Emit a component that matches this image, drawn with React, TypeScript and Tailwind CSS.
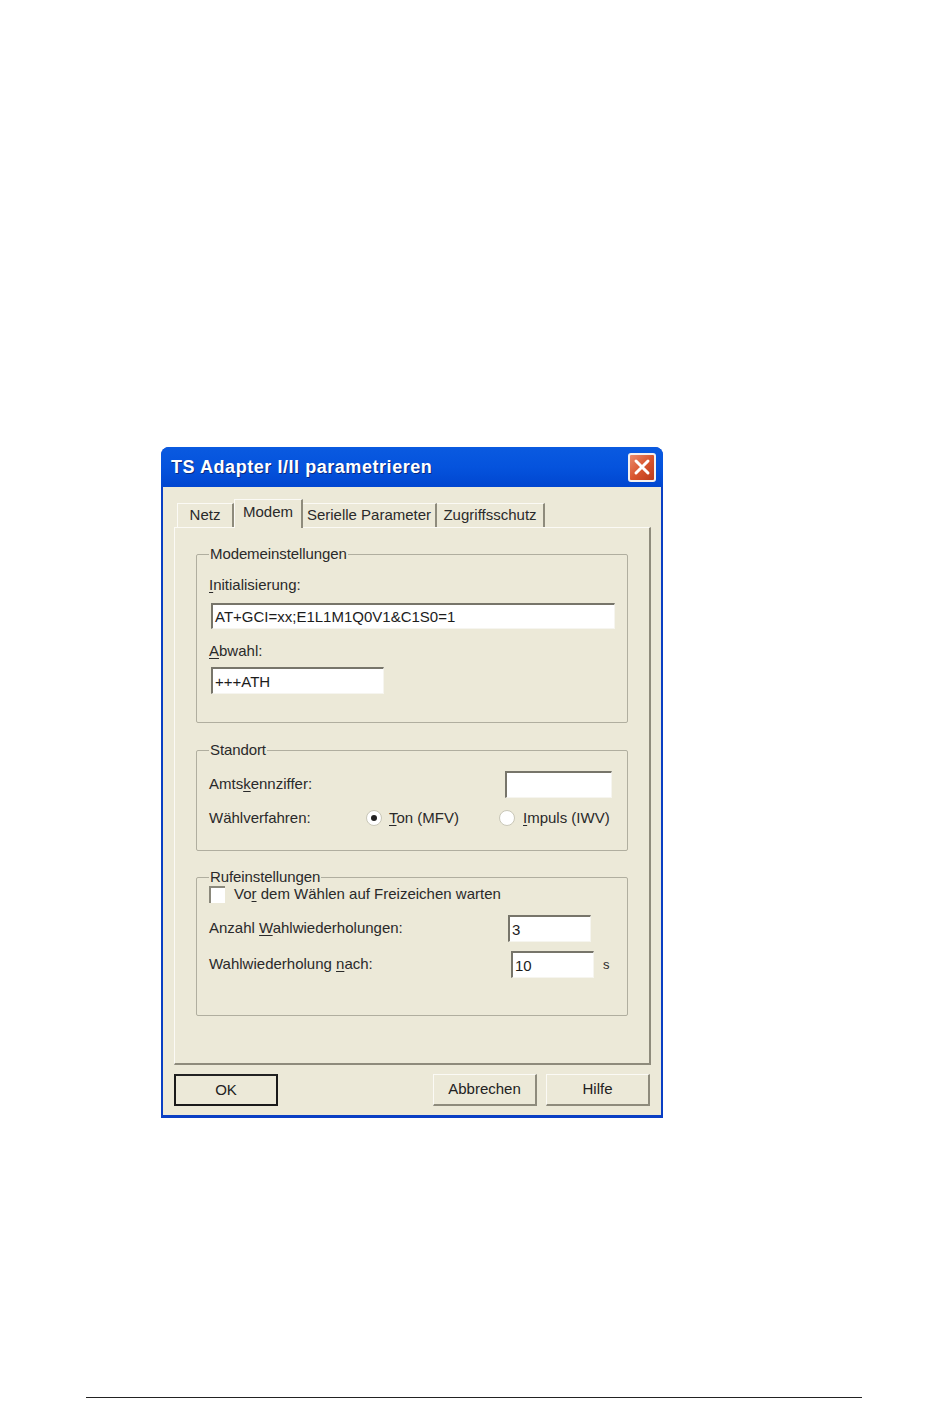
const font = "font-['Liberation_Sans',Arial,sans-serif]";

function Key({ children }: { children: string }) {
  return <span className="underline underline-offset-2 decoration-1">{children}</span>;
}

function Input({ value, className, bold }: { value?: string; className: string; bold?: boolean }) {
  return (
    <div
      className={`bg-white border-t-2 border-l-2 border-r border-b border-t-[#77756a] border-l-[#77756a] border-r-[#f6f5ef] border-b-[#f6f5ef] pl-[2px] flex items-center text-[15px] leading-none text-[#1c1c1c] whitespace-nowrap ${className} ${bold ? "font-normal" : ""}`}
    >
      {value}
    </div>
  );
}

function Group({ title, className, children }: { title: string; className: string; children: React.ReactNode }) {
  return (
    <fieldset className={`border border-[#b0ae9f] rounded-[2px] mx-[21px] px-3 ${className}`}>
      <legend className="ml-0 px-[1px] h-[18px] leading-[18px] text-[15px] text-[#2a2a2a] tracking-[-0.1px]">{title}</legend>
      {children}
    </fieldset>
  );
}

function Tab({ children, className }: { children: React.ReactNode; className: string }) {
  return (
    <div className={`flex items-center justify-center text-[15px] text-[#2a2a2a] border-t border-l border-[#fbfaf5] border-r-2 border-r-[#8e8b7c] whitespace-nowrap ${className}`}>
      {children}
    </div>
  );
}

function Button({ children, className }: { children: string; className: string }) {
  return (
    <div className={`w-[104px] h-[32px] flex items-center justify-center text-[15px] text-[#222] bg-[#ece9d8] ${className}`}>
      {children}
    </div>
  );
}

export default function App() {
  return (
    <div className={`w-[950px] h-[1411px] bg-white overflow-hidden pt-[447px] ${font}`}>
      <div className="ml-[161px] w-[502px] h-[671px] flex flex-col rounded-t-[8px] bg-[#0a3fc4] overflow-hidden">
        <div className="h-[40px] shrink-0 flex items-center justify-between pl-[10px] pr-[7px] bg-gradient-to-b from-[#0a5ae0] via-[#0553dd] to-[#0146d0]">
          <span className="text-white font-bold text-[18px] tracking-[0.55px] [text-shadow:1px_1px_0_#0a2a80]">TS Adapter I/II parametrieren</span>
          <div className="w-[28px] h-[29px] rounded-[3px] border-2 border-[#f4f1f0] bg-gradient-to-br from-[#e98a6c] via-[#d9562f] to-[#bb3a1c] flex items-center justify-center">
            <svg width="18" height="18" viewBox="0 0 18 18">
              <path d="M3 3 L15 15 M15 3 L3 15" stroke="#fff" strokeWidth="3" strokeLinecap="round" />
            </svg>
          </div>
        </div>
        <div className="mx-[2px] mb-[3px] flex-1 bg-[#ece9d8] pt-[11px] flex flex-col">
          <div className="flex items-end h-[29px] pl-[14px]">
            <Tab className="w-[57px] h-[24px] border-r-0">Netz</Tab>
            <Tab className="w-[69px] h-[29px] -mb-px relative z-10 bg-[#ece9d8] pb-[4px]">Modem</Tab>
            <Tab className="w-[134px] h-[24px] border-l-0">Serielle Parameter</Tab>
            <Tab className="w-[108px] h-[24px] border-l-0">Zugriffsschutz</Tab>
          </div>
          <div className="ml-[11px] w-[477px] h-[538px] border-t border-l border-t-[#fbfaf5] border-l-[#fbfaf5] border-r-2 border-b-2 border-r-[#8e8b7c] border-b-[#8e8b7c] text-[15px] text-[#2a2a2a] pt-[17px]">
            <Group title="Modemeinstellungen" className="h-[178px]">
              <div className="h-[18px] leading-[18px] mt-[13px]"><Key>I</Key>nitialisierung:</div>
              <Input value="AT+GCI=xx;E1L1M1Q0V1&C1S0=1" className="w-[404px] h-[26px] ml-[2px] mt-[9px]" />
              <div className="h-[18px] leading-[18px] mt-[13px]"><Key>A</Key>bwahl:</div>
              <Input value="+++ATH" className="w-[173px] h-[27px] ml-[2px] mt-[7px]" />
            </Group>
            <Group title="Standort" className="h-[110px] mt-[18px]">
              <div className="flex items-center justify-between h-[27px] mt-[12px] pr-[3px]">
                <span>Amts<Key>k</Key>ennziffer:</span>
                <Input className="w-[107px] h-[27px]" />
              </div>
              <div className="flex items-center h-[18px] mt-[11px]">
                <span className="w-[157px] shrink-0">Wählverfahren:</span>
                <div className="w-[16px] h-[16px] rounded-full bg-white border border-[#c9c7b8] flex items-center justify-center shrink-0">
                  <div className="w-[6px] h-[6px] rounded-full bg-[#222]" />
                </div>
                <span className="ml-[7px] w-[110px] shrink-0"><Key>T</Key>on (MFV)</span>
                <div className="w-[16px] h-[16px] rounded-full bg-white border border-[#c9c7b8] shrink-0" />
                <span className="ml-[8px]"><Key>I</Key>mpuls (IWV)</span>
              </div>
            </Group>
            <Group title="Rufeinstellungen" className="h-[148px] mt-[17px]">
              <div className="flex items-center h-[18px] mt-[-1px]">
                <div className="w-[16px] h-[17px] bg-white border-t-2 border-l-2 border-t-[#8a887b] border-l-[#8a887b] shrink-0" />
                <span className="ml-[9px]">Vo<Key>r</Key> dem Wählen auf Freizeichen warten</span>
              </div>
              <div className="flex items-center justify-between h-[27px] mt-[12px] pr-[24px]">
                <span>Anzahl <Key>W</Key>ahlwiederholungen:</span>
                <Input value="3" className="w-[83px] h-[27px]" />
              </div>
              <div className="flex items-center h-[27px] mt-[9px]">
                <span className="w-[302px] shrink-0">Wahlwiederholung <Key>n</Key>ach:</span>
                <Input value="10" className="w-[83px] h-[27px] shrink-0" />
                <span className="ml-[9px] text-[13px]">s</span>
              </div>
            </Group>
          </div>
          <div className="flex items-start mt-[9px] ml-[11px] w-[477px]">
            <Button className="border-2 border-[#1a1a1a] border-t-[#222] ">OK</Button>
            <Button className="ml-[155px] border-t border-l border-[#fbfaf5] border-r-2 border-b-2 border-r-[#8e8b7c] border-b-[#8e8b7c]">Abbrechen</Button>
            <Button className="ml-[9px] border-t border-l border-[#fbfaf5] border-r-2 border-b-2 border-r-[#8e8b7c] border-b-[#8e8b7c]">Hilfe</Button>
          </div>
        </div>
      </div>
      <div className="ml-[86px] w-[776px] h-px bg-[#222] mt-[279px]" />
    </div>
  );
}
